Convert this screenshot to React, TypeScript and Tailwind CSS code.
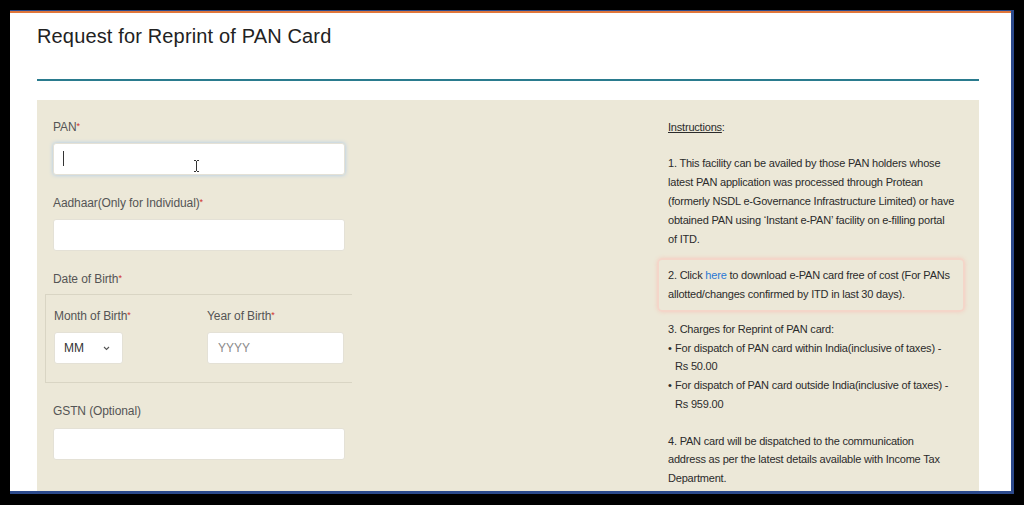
import React from "react";

const Req = () => <span className="text-[#d0312d] text-[9px] align-top relative -top-[1px]">*</span>;

const Label = ({ children, star = true }: { children: React.ReactNode; star?: boolean }) => (
  <div className="text-[12px] leading-[14px] text-[#555] tracking-[-0.1px]">
    {children}
    {star && <Req />}
  </div>
);

const TextBox = ({ placeholder, className = "" }: { placeholder?: string; className?: string }) => (
  <input
    type="text"
    placeholder={placeholder}
    className={`h-[32px] shrink-0 bg-white border border-[#e4e1d6] rounded-[3px] px-[10px] text-[12px] text-[#333] placeholder:text-[#8a8a8a] outline-none ${className}`}
  />
);

export default function App() {
  return (
    <div className="w-[1024px] h-[505px] bg-black pt-[10px] pl-[10px] overflow-hidden" style={{ fontFamily: '"Liberation Sans", Arial, sans-serif' }}>
      <div className="w-[1004px] h-[484px] border-t border-r-[3px] border-b-[3px] border-[#2c4a8c] bg-white overflow-hidden">
        <div className="h-[2px] bg-[#e0763a]" />
        <div className="px-[27px]">
          <h1 className="mt-[11px] text-[20px] leading-[24px] text-[#222] tracking-[0.15px]">Request for Reprint of PAN Card</h1>
          <div className="mt-[31px] h-[2px] w-[942px] bg-[#2a7b8e]" />

          <div className="mt-[19px] w-[942px] h-[420px] bg-[#ece8d8] flex justify-between pl-[16px] pr-[14px]">
            {/* form */}
            <div className="w-[292px] pt-[20px] flex flex-col">
              <Label>PAN</Label>
              <div className="relative mt-[9px] shrink-0">
                <TextBox className="w-full border-[#85b2e2] shadow-[0_0_4px_#a9c9ec]" />
                <span className="absolute left-[10px] top-[8px] w-px h-[15px] bg-[#333]" />
                <svg className="absolute left-[140px] top-[17px]" width="7" height="12" viewBox="0 0 7 12">
                  <path d="M1 0.5h2M4 0.5h2M3.5 1v10M1 11.5h2M4 11.5h2" stroke="#333" strokeWidth="1" fill="none" />
                </svg>
              </div>

              <div className="mt-[21px]">
                <Label>Aadhaar(Only for Individual)</Label>
              </div>
              <TextBox className="mt-[9px] w-full" />

              <div className="mt-[21px]">
                <Label>Date of Birth</Label>
              </div>
              <div className="mt-[8px] -ml-[8px] w-[307px] shrink-0 border-t border-l border-b border-[#d9d5c4] pl-[8px] pt-[14px] pb-[18px] flex">
                <div className="w-[153px]">
                  <Label>Month of Birth</Label>
                  <div className="mt-[9px] w-[69px] h-[32px] bg-white border border-[#e4e1d6] rounded-[3px] flex items-center justify-between pl-[9px] pr-[12px] text-[12px] text-[#333]">
                    <span>MM</span>
                    <svg width="7" height="5" viewBox="0 0 7 5">
                      <path d="M1 1l2.5 2.5L6 1" stroke="#555" strokeWidth="1.1" fill="none" />
                    </svg>
                  </div>
                </div>
                <div className="flex flex-col">
                  <Label>Year of Birth</Label>
                  <TextBox placeholder="YYYY" className="mt-[9px] w-[137px]" />
                </div>
              </div>

              <div className="mt-[21px]">
                <Label star={false}>GSTN (Optional)</Label>
              </div>
              <TextBox className="mt-[10px] w-full" />
            </div>

            {/* instructions */}
            <div className="w-[308px] pt-[18px] text-[11px] leading-[19px] text-[#2b2b2b] tracking-[-0.2px] whitespace-nowrap">
              <p className="px-[11px]">
                <span className="underline">Instructions</span>:
              </p>
              <p className="px-[11px] mt-[17px]">
                1. This facility can be availed by those PAN holders whose<br />
                latest PAN application was processed through Protean<br />
                (formerly NSDL e-Governance Infrastructure Limited) or have<br />
                obtained PAN using ‘Instant e-PAN’ facility on e-filling portal<br />
                of ITD.
              </p>
              <div className="mt-[9px] border-2 border-[#f4d6c9] rounded-[5px] shadow-[0_0_4px_#f2cdbf] pl-[9px] pt-[6px] pb-[6px]">
                2. Click <span className="text-[#2a78d4]">here</span> to download e-PAN card free of cost (For PANs<br />
                allotted/changes confirmed by ITD in last 30 days).
              </div>
              <div className="px-[11px] mt-[8px] leading-[18.7px]">
                <p>3. Charges for Reprint of PAN card:</p>
                <div className="flex">
                  <span className="w-[7px] shrink-0">•</span>
                  <span>For dispatch of PAN card within India(inclusive of taxes) -<br />Rs 50.00</span>
                </div>
                <div className="flex">
                  <span className="w-[7px] shrink-0">•</span>
                  <span>For dispatch of PAN card outside India(inclusive of taxes) -<br />Rs 959.00</span>
                </div>
              </div>
              <p className="px-[11px] mt-[18px] leading-[18.7px]">
                4. PAN card will be dispatched to the communication<br />
                address as per the latest details available with Income Tax<br />
                Department.
              </p>
            </div>
          </div>
        </div>
      </div>
    </div>
  );
}
